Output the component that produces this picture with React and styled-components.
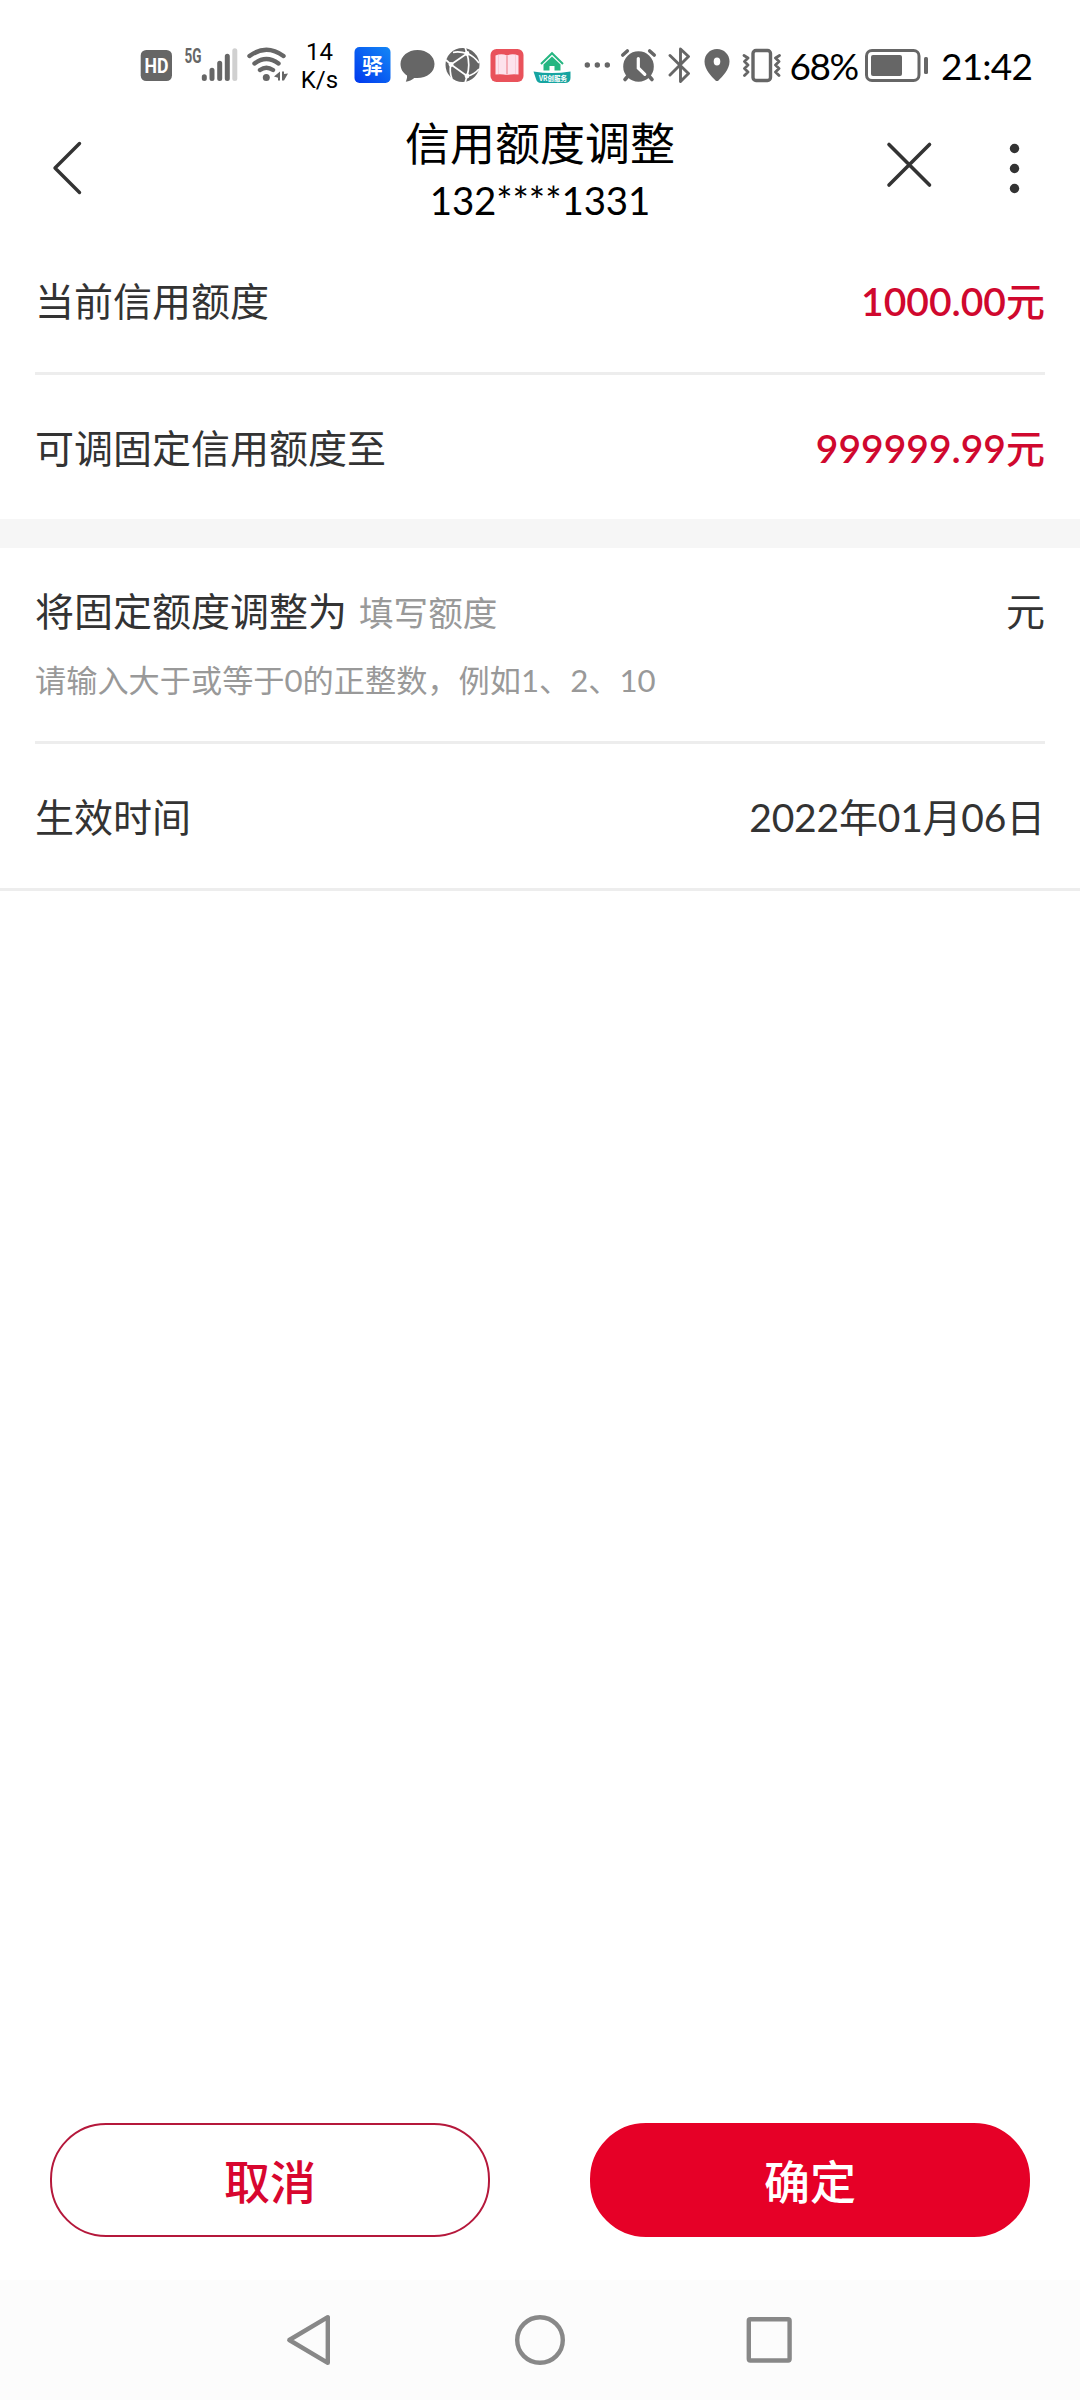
import React from "react";
import styled, { createGlobalStyle } from "styled-components";

const GlobalStyle = createGlobalStyle`
  * { box-sizing: border-box; }
  html, body { margin: 0; padding: 0; background: #fff; }
  body { font-family: Lato, "Noto Sans CJK SC", sans-serif; }
  button { font-family: inherit; padding: 0; cursor: pointer; }
  svg { display: block; flex: none; }
`;

const Screen = styled.div`
  width: 1080px;
  height: 2400px;
  display: flex;
  flex-direction: column;
  background: #fff;
  color: #333;
  overflow: hidden;
`;

const StatusBar = styled.div`
  height: 108px;
  flex: none;
  display: flex;
  align-items: flex-start;
  padding: 44px 0 0 140px;
`;

const StatusIcon = styled.svg.attrs((p) => ({
  width: p.$w,
  height: 44,
  viewBox: `0 44 ${p.$w} 44`,
  fill: "#666",
}))`
  margin-left: ${(p) => p.$gap || 0}px;
`;

const NetSpeed = styled.div`
  width: 42px;
  margin: -6px 0 0 11px;
  padding-right: 1px;
  font: 24px/28px Roboto, sans-serif;
  color: #000;
  text-align: center;
`;

const StatusText = styled.div`
  width: ${(p) => p.$w}px;
  margin-left: ${(p) => p.$gap}px;
  font-size: 37px;
  line-height: 44px;
  color: #000;
  letter-spacing: ${(p) => p.$track || 0}px;
  white-space: nowrap;
`;

const Header = styled.header`
  height: 120px;
  flex: none;
  display: flex;
  justify-content: space-between;
`;

const HeaderSide = styled.div`
  width: 220px;
  display: flex;
  justify-content: ${(p) => (p.$end ? "flex-end" : "flex-start")};
`;

const Heading = styled.div`
  flex: 1;
  text-align: center;
  color: #000;
`;

const Title = styled.h1`
  margin: 0;
  padding-top: 4px;
  font-size: 45px;
  font-weight: 400;
  line-height: 64px;
`;

const Subtitle = styled.div`
  font-size: 38.5px;
  line-height: 48px;
  letter-spacing: -0.1px;
`;

const Row = styled.div`
  height: ${(p) => p.$h}px;
  flex: none;
  margin: 0 ${(p) => (p.$full ? 0 : 35)}px;
  padding: 2px ${(p) => (p.$full ? 35 : 0)}px 0;
  display: flex;
  align-items: center;
  justify-content: space-between;
  font-size: 39px;
  line-height: 56px;
  border-bottom: ${(p) => (p.$line ? "3px solid #ededed" : "none")};
`;

const Amount = styled.span`
  color: #d0082e;
  font-weight: 500;
`;

const Digits = styled.span`
  font-weight: 600;
`;

const Value = styled.span`
  letter-spacing: -0.2px;
`;

const Band = styled.div`
  height: 29px;
  flex: none;
  background: #f6f6f6;
`;

const EditBlock = styled.section`
  height: 196px;
  flex: none;
  margin: 0 35px;
  padding-top: 35px;
  border-bottom: 3px solid #ededed;
`;

const EditLine = styled.div`
  display: flex;
  font-size: 39px;
  line-height: 56px;
`;

const Placeholder = styled.span`
  flex: 1;
  margin-left: 12px;
  padding-top: 2px;
  font-size: 34.6px;
  color: #999;
`;

const Hint = styled.div`
  margin-top: 16px;
  font-size: 31.2px;
  line-height: 46px;
  color: #999;
`;

const Actions = styled.div`
  margin-top: auto;
  flex: none;
  height: 157px;
  padding: 0 50px;
  display: flex;
  justify-content: space-between;
  align-items: flex-start;
`;

const ActionButton = styled.button`
  width: 440px;
  height: 114px;
  border-radius: 56px;
  border: 2px solid ${(p) => (p.$primary ? "#e60027" : "#b5183b")};
  background: ${(p) => (p.$primary ? "#e60027" : "#fff")};
  color: ${(p) => (p.$primary ? "#fff" : "#d8062f")};
  font-size: 46px;
  font-weight: 500;
  line-height: 64px;
  padding-top: 3px;
`;

const NavBar = styled.nav`
  height: 120px;
  flex: none;
  display: flex;
  justify-content: center;
  align-items: center;
  gap: 169px;
  background: #fcfcfc;
`;

const NavIcon = styled.svg.attrs({ width: 60, height: 60, viewBox: "0 0 60 60" })`
  fill: none;
  stroke: #888;
  stroke-width: 4.4;
  stroke-linejoin: round;
`;

function Status() {
  return (
    <StatusBar>
      <StatusIcon $w={32}>
        <rect x="0.7" y="50" width="31.3" height="31" rx="5.5" />
        <text x="16.4" y="73" textAnchor="middle" fontFamily="Roboto" fontWeight="700" fontSize="20" fill="#fff" textLength="24" lengthAdjust="spacingAndGlyphs">HD</text>
      </StatusIcon>
      <StatusIcon $w={54} $gap={12}>
        <text x="0.5" y="62.8" fontFamily="Roboto" fontWeight="700" fontSize="20" textLength="17" lengthAdjust="spacingAndGlyphs">5G</text>
        <g strokeWidth="5" strokeLinecap="round" stroke="#666">
          <path d="M20.3 76.8v1.7M28 70.2v8.3M35.7 63.2v15.3M43.3 56.2v22.3" />
          <path d="M50.800 50.8v27.7" stroke="#d0d0d0" />
        </g>
      </StatusIcon>
      <StatusIcon $w={41} $gap={9}>
        <g fill="none" stroke="#666" strokeWidth="4.4" strokeLinecap="round">
          <path d="M2.5 56Q19.3 43.500 36.500 56M7.500 63.500Q19.300 54.500 31.500 63.500M13 70Q19.300 65.500 26 70" />
        </g>
        <circle cx="19.300" cy="77.600" r="3.500" />
        <path d="M27 76.500l6-5v9h-2v-2.800zM35 71.500h2v2.500l4-.5-4 7h-2z" />
      </StatusIcon>
      <NetSpeed>14<br />K/s</NetSpeed>
      <StatusIcon $w={37} $gap={12.5}>
        <defs>
          <linearGradient id="blue" x1="1" y1="0" x2="0" y2="1">
            <stop offset="0" stopColor="#1487f5" />
            <stop offset="1" stopColor="#0038ee" />
          </linearGradient>
        </defs>
        <rect x="0.5" y="47" width="36" height="36" rx="5" fill="url(#blue)" />
        <text x="18.500" y="73.200" textAnchor="middle" fontFamily="Noto Sans CJK SC" fontWeight="700" fontSize="21" fill="#fff">驿</text>
      </StatusIcon>
      <StatusIcon $w={35} $gap={9.500}>
        <path d="M17.500 50C8 50 .5 56.300 .5 64c0 5 2.600 9 6.500 11.500.3 2.500-.5 4-1.200 6.300 3-.5 6.500-2.200 8.500-3.900 11.500 1.200 20.200-5 20.200-13.900C34.500 56.300 27 50 17.500 50z" />
      </StatusIcon>
      <StatusIcon $w={35} $gap={10}>
        <circle cx="17.500" cy="65" r="17" />
        <g fill="none" stroke="#fff" strokeWidth="1.700">
          <path d="M22 53.500L6 64.500M6 64.500L22 76M22 53.500Q25.500 65 22 76" />
          <path d="M22 53.500Q14 51 8 52.500M22 53.500L20 47M22 53.500Q29 56 34 63M6 64.500L1 60M6 64.500Q4 71 7 79M22 76Q29 75 34 69M22 76L20 83" />
        </g>
        <g fill="#fff"><circle cx="22" cy="53.500" r="2.400" /><circle cx="6" cy="64.500" r="2.400" /><circle cx="22" cy="76" r="2.400" /></g>
      </StatusIcon>
      <StatusIcon $w={34} $gap={10}>
        <rect x="0.500" y="49" width="33" height="33" rx="6" fill="#e9525b" />
        <path d="M5.500 55.500q6-2.500 11.500 0 5.500-2.500 11.500 0v19q-6-.8-11.500.5-5.500-1.300-11.500-.5z" fill="#fde3ec" />
        <path d="M8.500 55v19M25.500 55v19" stroke="#f9cdd8" strokeWidth="1" />
        <path d="M17 56v18.500" stroke="#ee8893" strokeWidth="1.200" />
      </StatusIcon>
      <StatusIcon $w={38} $gap={9}>
        <path d="M8 64L19 53.200 30 64" fill="none" stroke="#25b681" strokeWidth="2" />
        <path d="M10.500 64.500l8.500-8 8.500 8v6h-6V66h-5v4.500h-6z" fill="#25b681" />
        <path d="M.5 71.500q18 3 37 0V78q0 5-6 5H8Q4 83 3 79z" fill="#16a4a0" />
        <text x="20" y="81.300" textAnchor="middle" fontFamily="Noto Sans CJK SC" fontWeight="700" fontSize="7" fill="#fff" textLength="28" lengthAdjust="spacingAndGlyphs">VR创服务</text>
      </StatusIcon>
      <StatusIcon $w={28} $gap={12.500}>
        <circle cx="3.300" cy="65" r="2.700" /><circle cx="13.300" cy="65" r="2.700" /><circle cx="23.300" cy="65" r="2.700" />
      </StatusIcon>
      <StatusIcon $w={37} $gap={8}>
        <circle cx="18.500" cy="66.500" r="15.300" />
        <path d="M2.800 55l4.500-4M34.200 55l-4.500-4M5 79.500l3.500-4M32 79.500l-3.500-4" stroke="#666" strokeWidth="3.600" strokeLinecap="round" />
        <path d="M18.300 58.500v9.500l6.500 6.300" fill="none" stroke="#fff" strokeWidth="3.200" strokeLinecap="round" />
      </StatusIcon>
      <StatusIcon $w={24} $gap={11}>
        <path d="M2 55.500L20.500 73.500 12.500 81.500V49L20.500 56.500 2 75" fill="none" stroke="#666" strokeWidth="2.900" strokeLinejoin="round" strokeLinecap="round" />
      </StatusIcon>
      <StatusIcon $w={26} $gap={12}>
        <path fillRule="evenodd" d="M13 49C6 49 .5 54.500 .5 61.500c0 8 7 15 11 19q1.500 1.200 3 0c4-4 11-11 11-19C25.500 54.500 20 49 13 49zm0 8.500a3.300 4 0 1 1 0 8 3.300 4 0 0 1 0-8z" />
      </StatusIcon>
      <StatusIcon $w={42} $gap={11}>
        <rect x="12" y="50.500" width="17.500" height="30" rx="3" fill="none" stroke="#666" strokeWidth="3.400" />
        <path d="M3 55.500l4 2.500-3.500 3.500 3.500 3.500-3.500 3.500 3.500 3.500-3.500 3.500M38.500 55.500l-4 2.500 3.500 3.500-3.500 3.500 3.500 3.500-3.500 3.500 3.500 3.500" fill="none" stroke="#666" strokeWidth="2.800" strokeLinecap="round" strokeLinejoin="round" />
      </StatusIcon>
      <StatusText $w={67} $gap={7} $track={-1.500}>68%</StatusText>
      <StatusIcon $w={64} $gap={8.500}>
        <rect x="1.500" y="50.500" width="52.500" height="30" rx="5.500" fill="none" stroke="#666" strokeWidth="3" />
        <rect x="6" y="55" width="31" height="21" rx="2" />
        <rect x="59" y="57" width="4" height="17" rx="1.500" />
      </StatusIcon>
      <StatusText $w={92} $gap={12} $track={-0.800}>21:42</StatusText>
    </StatusBar>
  );
}

export default function App() {
  return (
    <>
      <GlobalStyle />
      <Screen>
        <Status />
        <Header>
          <HeaderSide>
            <svg width="110" height="120" viewBox="0 108 110 120">
              <path d="M79.500 143.500L55 168l24.500 24.500" fill="none" stroke="#333" strokeWidth="3.400" strokeLinecap="round" strokeLinejoin="round" />
            </svg>
          </HeaderSide>
          <Heading>
            <Title>信用额度调整</Title>
            <Subtitle>132****1331</Subtitle>
          </Heading>
          <HeaderSide $end>
            <svg width="220" height="120" viewBox="860 108 220 120">
              <path d="M889 144.500l40.500 40.500M929.500 144.500L889 185" fill="none" stroke="#333" strokeWidth="3.600" strokeLinecap="round" />
              <g fill="#333"><circle cx="1014.500" cy="148.500" r="4.700" /><circle cx="1014.500" cy="168.500" r="4.700" /><circle cx="1014.500" cy="188.500" r="4.700" /></g>
            </svg>
          </HeaderSide>
        </Header>
        <Row $h={147} $line><span>当前信用额度</span><Amount><Digits>1000.00</Digits>元</Amount></Row>
        <Row $h={144}><span>可调固定信用额度至</span><Amount><Digits>999999.99</Digits>元</Amount></Row>
        <Band />
        <EditBlock>
          <EditLine>
            <span>将固定额度调整为</span>
            <Placeholder>填写额度</Placeholder>
            <span>元</span>
          </EditLine>
          <Hint>请输入大于或等于0的正整数，例如1、2、10</Hint>
        </EditBlock>
        <Row $h={147} $line $full><span>生效时间</span><Value>2022年01月06日</Value></Row>
        <Actions>
          <ActionButton>取消</ActionButton>
          <ActionButton $primary>确定</ActionButton>
        </Actions>
        <NavBar>
          <NavIcon><path d="M46.800 7.200v45.600L8.300 30z" /></NavIcon>
          <NavIcon><circle cx="30" cy="30" r="22.800" /></NavIcon>
          <NavIcon><rect x="9.800" y="9.300" width="40.800" height="41.200" rx="1.500" /></NavIcon>
        </NavBar>
      </Screen>
    </>
  );
}
